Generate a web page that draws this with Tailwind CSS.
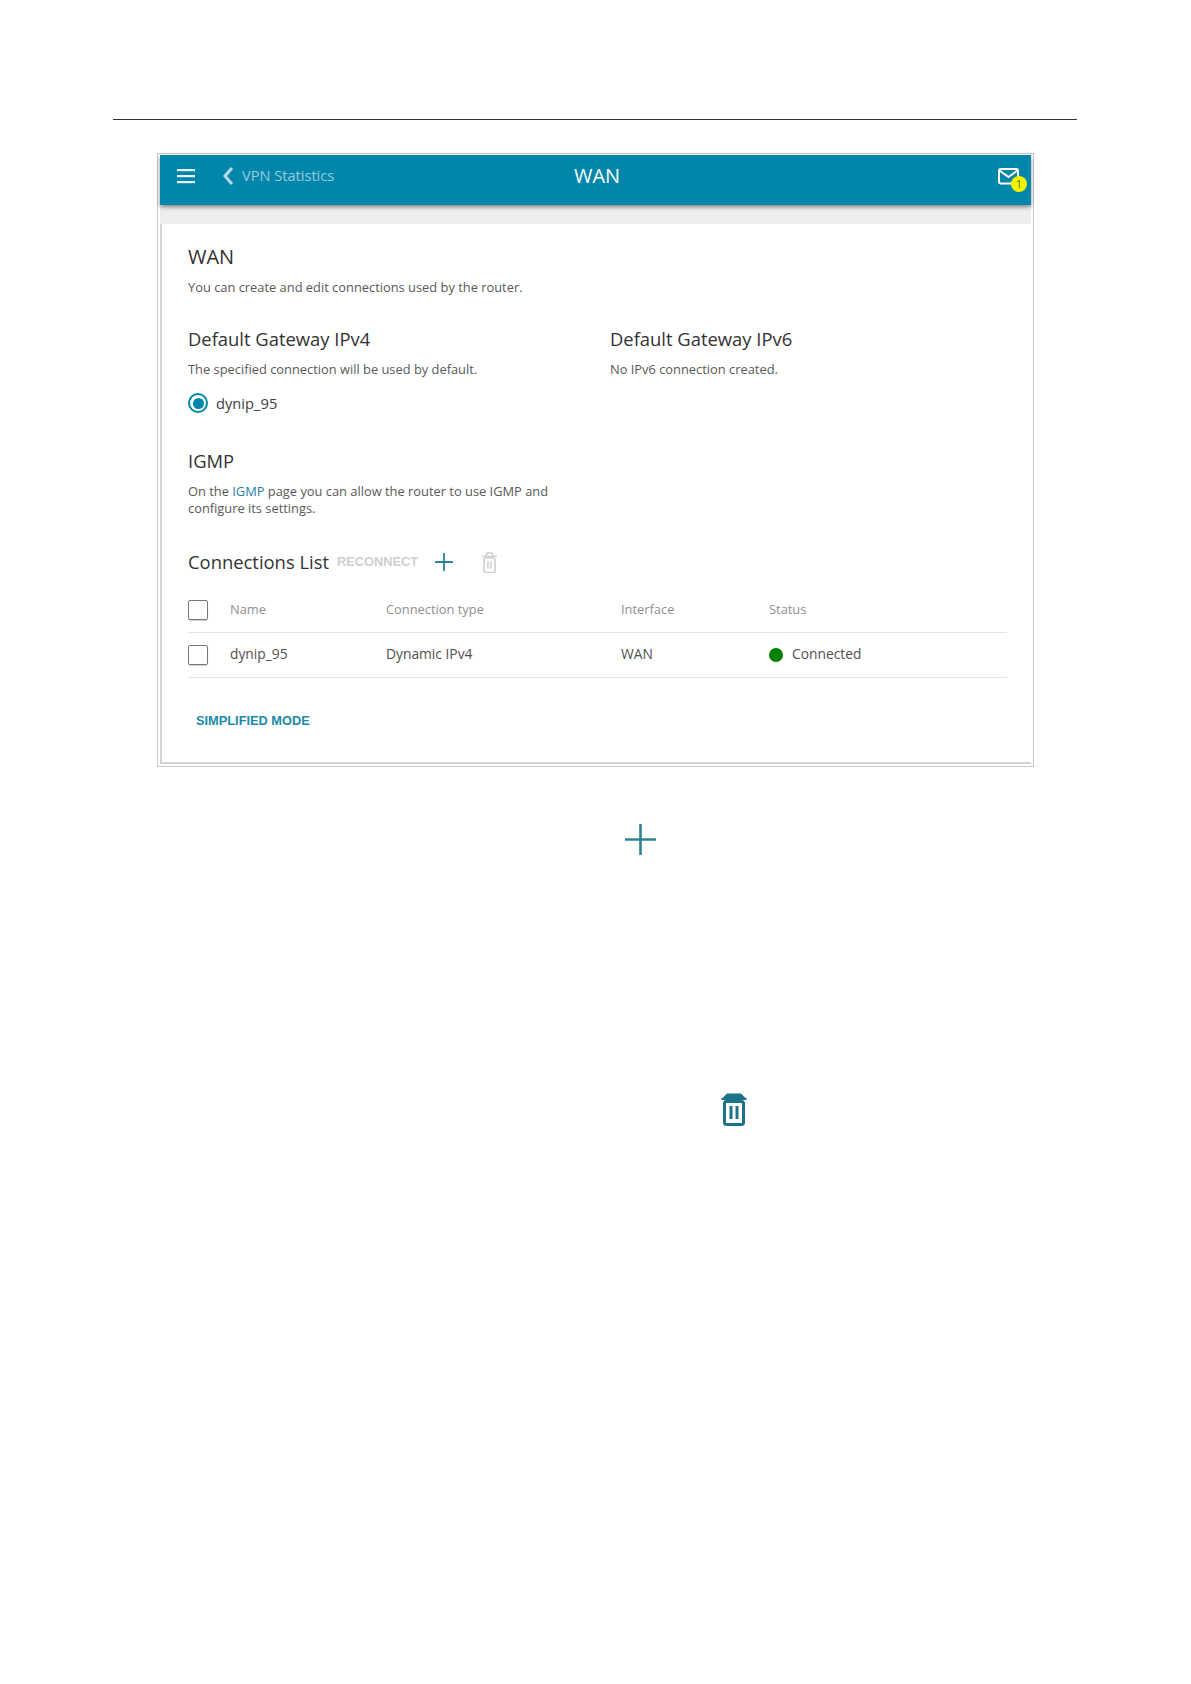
<!DOCTYPE html>
<html lang="en">
<head>
  <meta charset="UTF-8" />
  <title>WAN</title>
  <script src="https://cdn.jsdelivr.net/npm/@tailwindcss/browser@4"></script>
</head>
<body class="bg-white min-h-screen font-['Open_Sans',sans-serif] text-[#404040]">

<div class="pt-[119px] pl-[113px]">
  <div class="w-[964px] border-t border-[#333]"></div>
</div>

<!-- router screenshot -->
<div class="ml-[157px] mt-[33px] w-[877px] h-[614px] border border-[#c8c8c8] pt-px px-[2px] pb-[2px] flex flex-col">
  <header class="h-[50px] bg-[#0086aa] shadow-[0_2px_4px_rgba(0,0,0,0.45)] relative flex items-center text-white shrink-0 pb-[8px]">
    <svg class="ml-[17px] w-[18px] h-[16px]" viewBox="0 0 18 16" fill="#e8f4f8"><rect y="1" width="18" height="2.2"/><rect y="7" width="18" height="2.2"/><rect y="13" width="18" height="2.2"/></svg>
    <svg class="ml-[27px] w-[12px] h-[20px]" viewBox="0 0 12 20" fill="none" stroke="#b9dbe6" stroke-width="3"><path d="M10 2 L3 10 L10 18"/></svg>
    <span class="ml-[8px] text-[14.6px] text-[#9ccbda]">VPN Statistics</span>
    <span class="absolute left-[414px] text-[20px] leading-[28px] top-[7px]">WAN</span>
    <div class="absolute right-[10px] top-[13px] w-[23px] h-[24px]">
      <svg class="w-[21px] h-[17px]" viewBox="0 0 21 17" fill="none" stroke="#fff" stroke-width="2"><rect x="1" y="1" width="19" height="14.5" rx="2"/><path d="M1.500 2.500 L10.500 9 L19.500 2.500"/></svg>
      <span class="absolute left-[13px] top-[8px] w-[16px] h-[16px] rounded-full bg-[#f2f200] text-[#5a7a10] text-[11px] leading-[16px] text-center">1</span>
    </div>
  </header>
  <div class="h-[19px] bg-[#eeeeee] shrink-0"></div>

  <main class="flex-1 bg-white border-l-2 border-b-2 border-[#d4d4d4] pl-[26px] pr-[24px]">
    <h1 class="mt-[19px] text-[20px] leading-[28px] text-[#333]">WAN</h1>
    <p class="mt-[8px] text-[12.87px] leading-[17px] text-[#595959]">You can create and edit connections used by the router.</p>

    <div class="mt-[29px] grid grid-cols-[422px_1fr]">
      <section>
        <h2 class="text-[18.4px] leading-[28px] text-[#333]">Default Gateway IPv4</h2>
        <p class="mt-[8px] text-[12.87px] leading-[17px] text-[#595959]">The specified connection will be used by default.</p>
        <div class="mt-[15px] flex items-center h-[20px]">
          <span class="w-[20px] h-[20px] rounded-full border-2 border-[#0086aa] flex items-center justify-center"><span class="w-[11px] h-[11px] rounded-full bg-[#0086aa]"></span></span>
          <span class="ml-[8px] text-[14.7px] text-[#404040]">dynip_95</span>
        </div>
      </section>
      <section>
        <h2 class="text-[18.4px] leading-[28px] text-[#333]">Default Gateway IPv6</h2>
        <p class="mt-[8px] text-[12.87px] leading-[17px] text-[#595959]">No IPv6 connection created.</p>
      </section>
    </div>

    <h2 class="mt-[34px] text-[18.4px] leading-[28px] text-[#333]">IGMP</h2>
    <p class="mt-[8px] w-[400px] text-[12.87px] leading-[17px] text-[#595959]">On the <a class="text-[#1f7fa8]">IGMP</a> page you can allow the router to use IGMP and configure its settings.</p>

    <div class="mt-[31px] h-[28px] flex items-center">
      <h2 class="text-[18.4px] leading-[28px] text-[#333]">Connections List</h2>
      <span class="ml-[8px] font-['Liberation_Sans',sans-serif] font-bold text-[12.8px] text-[#cfcfcf]">RECONNECT</span>
      <svg class="ml-[17px] w-[18px] h-[18px]" viewBox="0 0 18 18" stroke="#2a8199" stroke-width="1.8"><path d="M9 0V18M0 9H18"/></svg>
      <svg class="ml-[29px] w-[15px] h-[21px]" viewBox="0 0 15 21" fill="none" stroke="#cfcfcf" stroke-width="1.6"><path d="M0 4.500H15M4 4L5 1H10L11 4"/><rect x="2" y="6" width="11" height="14.500" rx="1.500"/><path d="M6 9.500V16.500M9 9.500V16.500"/></svg>
    </div>

    <div class="mt-[12px]">
      <div class="h-[45px] border-b border-[#e2e2e2] grid grid-cols-[42px_156px_235px_148px_1fr] items-center text-[12.87px] text-[#8f8f8f]">
        <span class="w-[20px] h-[20px] rounded-[2px] border border-[#777] shadow-[0_1px_1px_rgba(0,0,0,0.2)]"></span>
        <span>Name</span>
        <span>Connection type</span>
        <span>Interface</span>
        <span>Status</span>
      </div>
      <div class="h-[45px] border-b border-[#e2e2e2] grid grid-cols-[42px_156px_235px_148px_1fr] items-center text-[13.8px] text-[#505050]">
        <span class="w-[20px] h-[20px] rounded-[2px] border border-[#777] shadow-[0_1px_1px_rgba(0,0,0,0.2)]"></span>
        <span class="mb-[2px]">dynip_95</span>
        <span class="mb-[2px]">Dynamic IPv4</span>
        <span class="mb-[2px]">WAN</span>
        <span class="flex items-center"><span class="w-[14px] h-[14px] rounded-full bg-[#008000]"></span><span class="ml-[9px] mb-[2px]">Connected</span></span>
      </div>
    </div>

    <a class="block mt-[34px] ml-[8px] font-['Liberation_Sans',sans-serif] font-bold text-[12.8px] leading-[17px] text-[#1a8aa8]">SIMPLIFIED MODE</a>
  </main>
</div>

<!-- enlarged icons from the manual text -->
<div class="ml-[625px] mt-[57px] w-[31px] h-[31px]">
  <svg class="w-[31px] h-[31px]" viewBox="0 0 31 31" stroke="#2f8296" stroke-width="2.6"><path d="M15.500 0V31M0 15.500H31"/></svg>
</div>
<div class="ml-[721px] mt-[237px] w-[26px] h-[34px]">
  <svg class="w-[26px] h-[34px]" viewBox="0 0 26 34" fill="none" stroke="#1c7389" stroke-width="3"><path d="M1 6.500L6 1.500H20L25 6.500Z" fill="#1c7389" stroke="none"/><path d="M0.500 7H25.500" stroke-width="2"/><rect x="3.500" y="9.500" width="19" height="23" rx="2"/><path d="M10 14V27M16 14V27"/></svg>
</div>

</body>
</html>
